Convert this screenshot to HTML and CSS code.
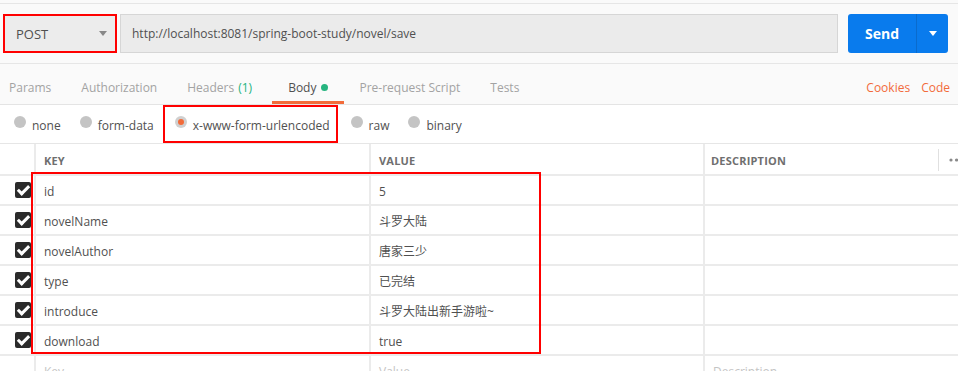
FILE: index.html
```html
<!DOCTYPE html>
<html lang="zh-CN">
<head>
  <meta charset="UTF-8">
  <title>POST novel/save</title>
  <link rel="stylesheet" href="styles.css">
</head>
<body>
  <div class="top-strip"></div>

  <div class="request-bar">
    <div class="method-box">
      <div class="method">
        <span>POST</span>
        <span class="caret"></span>
      </div>
    </div>
    <div class="url">http://localhost:8081/spring-boot-study/novel/save</div>
    <div class="send">
      <span class="send-label">Send</span>
      <span class="send-more"><span class="caret white"></span></span>
    </div>
  </div>

  <div class="tabs">
    <span class="tab first">Params</span>
    <span class="tab">Authorization</span>
    <span class="tab">Headers <em class="count">(1)</em></span>
    <span class="tab active">Body <i class="dot"></i></span>
    <span class="tab">Pre-request Script</span>
    <span class="tab">Tests</span>
    <span class="tab-links">
      <a>Cookies</a>
      <a>Code</a>
    </span>
  </div>

  <div class="body-types">
    <label class="opt"><span class="radio"></span>none</label>
    <label class="opt"><span class="radio"></span>form-data</label>
    <label class="opt marked"><span class="radio on"></span>x-www-form-urlencoded</label>
    <label class="opt"><span class="radio"></span>raw</label>
    <label class="opt"><span class="radio"></span>binary</label>
  </div>

  <div class="kv-table">
    <div class="kv-row head">
      <div class="cell check"></div>
      <div class="cell">KEY</div>
      <div class="cell">VALUE</div>
      <div class="cell desc-head">
        <span>DESCRIPTION</span>
        <span class="more">
          <svg width="14" height="4" viewBox="0 0 14 4"><circle cx="2" cy="2" r="1.6" fill="#8a8a8a"/><circle cx="7.5" cy="2" r="1.6" fill="#8a8a8a"/><circle cx="13" cy="2" r="1.6" fill="#8a8a8a"/></svg>
        </span>
      </div>
    </div>

    <div class="kv-row">
      <div class="cell check"><span class="box"></span></div>
      <div class="cell">id</div>
      <div class="cell">5</div>
      <div class="cell"></div>
    </div>
    <div class="kv-row">
      <div class="cell check"><span class="box"></span></div>
      <div class="cell">novelName</div>
      <div class="cell">斗罗大陆</div>
      <div class="cell"></div>
    </div>
    <div class="kv-row">
      <div class="cell check"><span class="box"></span></div>
      <div class="cell">novelAuthor</div>
      <div class="cell">唐家三少</div>
      <div class="cell"></div>
    </div>
    <div class="kv-row">
      <div class="cell check"><span class="box"></span></div>
      <div class="cell">type</div>
      <div class="cell">已完结</div>
      <div class="cell"></div>
    </div>
    <div class="kv-row">
      <div class="cell check"><span class="box"></span></div>
      <div class="cell">introduce</div>
      <div class="cell">斗罗大陆出新手游啦~</div>
      <div class="cell"></div>
    </div>
    <div class="kv-row">
      <div class="cell check"><span class="box"></span></div>
      <div class="cell">download</div>
      <div class="cell">true</div>
      <div class="cell"></div>
    </div>
    <div class="kv-row placeholder">
      <div class="cell check"></div>
      <div class="cell">Key</div>
      <div class="cell">Value</div>
      <div class="cell">Description</div>
    </div>

    <!-- annotation box around the params -->
    <div class="mark-box"></div>
  </div>
</body>
</html>
```

FILE: styles.css
```css
body {
  margin: 0;
  font-family: "Open Sans", "Noto Sans CJK SC", sans-serif;
  font-size: 12px;
  color: #505050;
  background: #fff;
  overflow: hidden;
}

.top-strip {
  height: 3px;
  background: #fafafa;
  border-bottom: 1px solid #e6e6e6;
}

/* request bar */
.request-bar {
  display: flex;
  height: 39px;
  padding: 10px 10px 10px 3px;
  background: #fafafa;
  border-bottom: 1px solid #e6e6e6;
}
.method-box {
  width: 110px;
  border: 2px solid #f00;
  margin-right: 3px;
}
.method {
  display: flex;
  align-items: center;
  justify-content: space-between;
  height: 100%;
  padding: 0 8px 0 11px;
  background: #ececec;
  font-size: 13px;
  color: #505050;
}
.caret {
  width: 0;
  height: 0;
  border-left: 4px solid transparent;
  border-right: 4px solid transparent;
  border-top: 5px solid #888;
}
.caret.white { border-top-color: #fff; }

.url {
  flex: 1;
  display: flex;
  align-items: center;
  padding-left: 11px;
  background: #ebebeb;
  border: 1px solid #d6d6d6;
  color: #505050;
}
.send {
  display: flex;
  width: 100px;
  margin-left: 10px;
  background: #097bed;
  border-radius: 3px;
  color: #fff;
}
.send-label {
  flex: 1;
  display: flex;
  align-items: center;
  justify-content: center;
  font-size: 14px;
  font-weight: bold;
}
.send-more {
  width: 31px;
  display: flex;
  align-items: center;
  justify-content: center;
  border-left: 1px solid #0a6bcd;
}

/* tabs */
.tabs {
  display: flex;
  height: 40px;
  background: #fafafa;
  border-bottom: 1px solid #e4e4e4;
}
.tab {
  display: flex;
  align-items: center;
  padding: 10px 15px 0;
  color: #a3a3a3;
  border-bottom: 3px solid transparent;
}
.tab.first { padding-left: 9px; }
.tab.active {
  color: #505050;
  border-bottom-color: #f26b3a;
  margin-left: 5px;
  padding-left: 16px;
  padding-right: 16px;
}
.count {
  font-style: normal;
  color: #26b47f;
  margin-left: 4px;
}
.dot {
  width: 7px;
  height: 7px;
  border-radius: 50%;
  background: #26b47f;
  margin-left: 5px;
}
.tab-links {
  margin-left: auto;
  display: flex;
  align-items: center;
  gap: 11px;
  padding: 10px 8px 3px 0;
}
.tab-links a { color: #f26b3a; }

/* body type radios */
.body-types {
  display: flex;
  height: 38px;
  padding-left: 14px;
  border-bottom: 1px solid #e6e6e6;
}
.opt {
  display: flex;
  align-items: center;
  padding-top: 2px;
  margin-right: 19px;
  color: #505050;
}
.opt.marked {
  border: 2px solid #f00;
  padding: 2px 6px 0 10px;
  margin-left: -10px;
  margin-right: 13px;
}
.radio {
  width: 12px;
  height: 12px;
  border-radius: 50%;
  background: #c4c4c4;
  margin-right: 6px;
  position: relative;
  top: -3px;
}
.radio.on {
  background: #d0d0d0;
  display: flex;
  align-items: center;
  justify-content: center;
}
.radio.on::after {
  content: "";
  width: 6px;
  height: 6px;
  border-radius: 50%;
  background: #f26b3a;
}

/* key / value table */
.kv-table { position: relative; }
.kv-row {
  display: grid;
  grid-template-columns: 34px 335px 334px 1fr;
  height: 28px;
  border-bottom: 2px solid #ebebeb;
}
.kv-row.head { height: 30px; }
.cell {
  display: flex;
  align-items: center;
  padding: 2px 0 0 8px;
  border-left: 2px solid #ebebeb;
  white-space: nowrap;
  overflow: hidden;
}
.cell.check {
  border-left: none;
  padding: 0 3px 0 0;
  justify-content: flex-end;
}
.head .cell {
  font-size: 11px;
  font-weight: bold;
  color: #6f6f6f;
  letter-spacing: 0.2px;
}
.desc-head { justify-content: space-between; padding-left: 6px; }
.more {
  display: flex;
  align-items: center;
  height: 22px;
  padding-left: 10px;
  border-left: 1px solid #e0e0e0;
  margin-right: -5px;
}
.box {
  width: 16px;
  height: 16px;
  border-radius: 2px;
  background: #2b2b2b;
  position: relative;
}
.box::after {
  content: "";
  position: absolute;
  left: 5px;
  top: 1px;
  width: 4px;
  height: 9px;
  border: solid #fff;
  border-width: 0 3px 3px 0;
  transform: rotate(45deg);
}
.placeholder .cell { color: #c4c4c4; }

.mark-box {
  position: absolute;
  left: 31px;
  top: 28px;
  width: 506px;
  height: 178px;
  border: 2px solid #f00;
}
```
